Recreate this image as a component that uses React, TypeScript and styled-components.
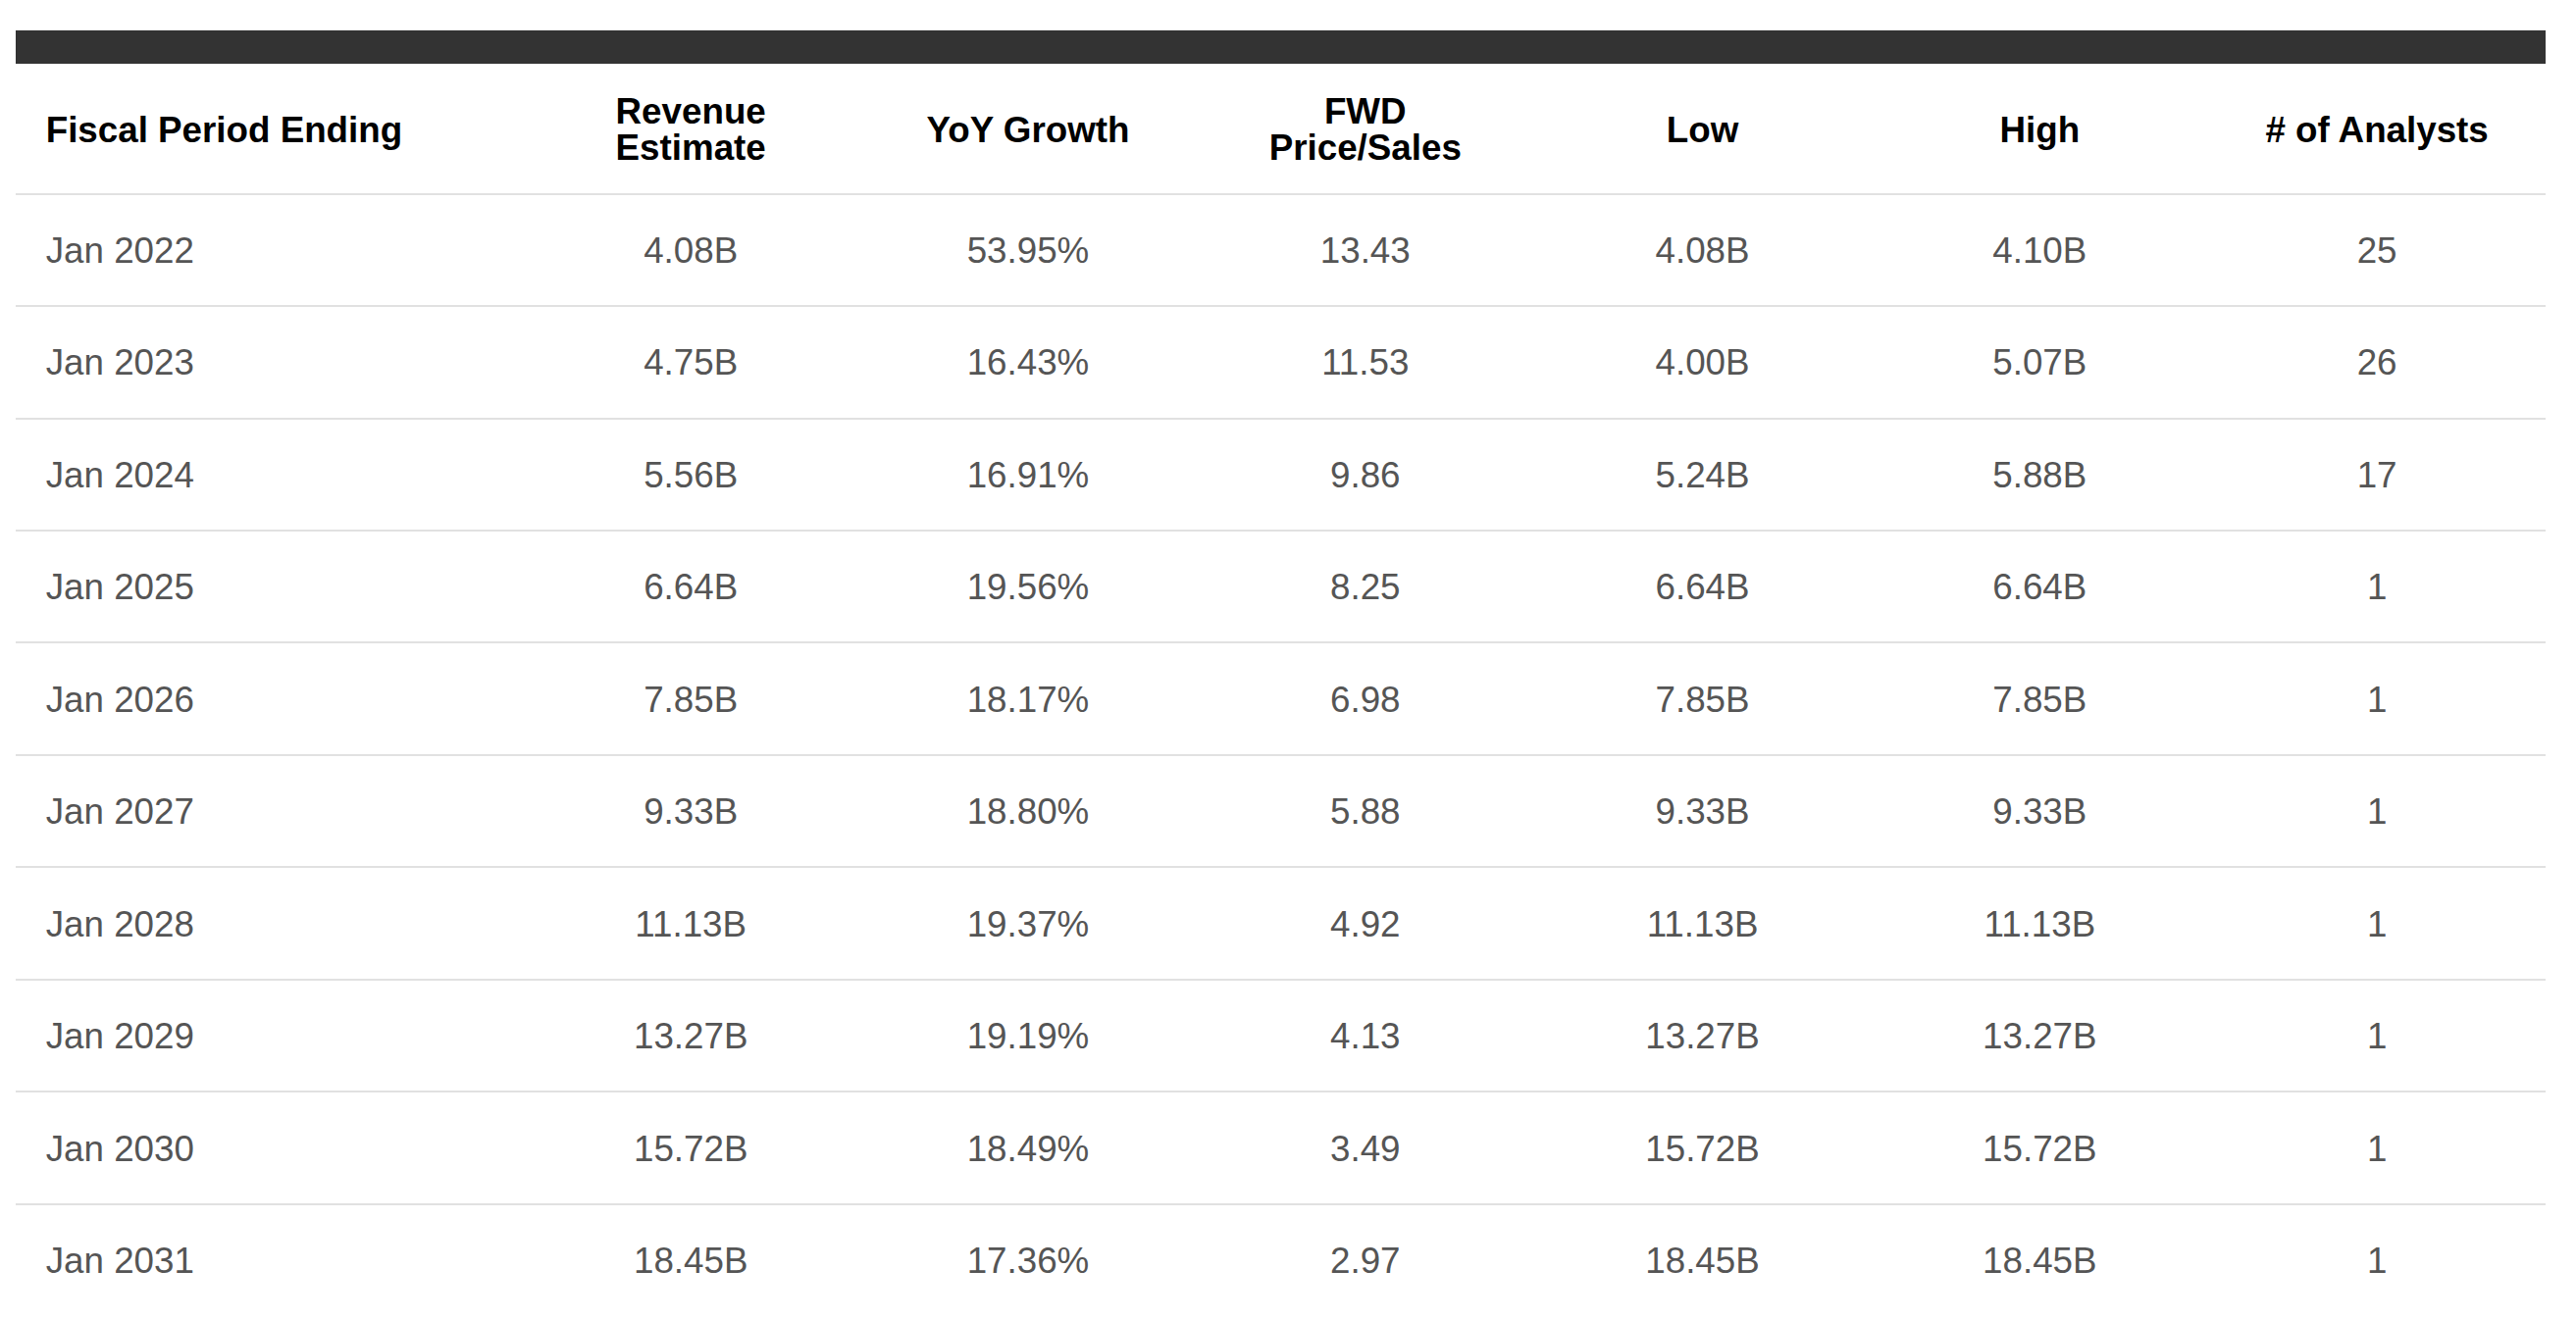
import React from "react";
import styled, { createGlobalStyle } from "styled-components";

const GlobalStyle = createGlobalStyle`
  html, body {
    margin: 0;
    padding: 0;
    background: #ffffff;
  }
  body {
    font-family: "Liberation Sans", Arial, Helvetica, sans-serif;
  }
`;

const Page = styled.div`
  padding: 30.7px 31px 0 16.3px;
  box-sizing: border-box;
  width: 2626px;
`;

const TopBar = styled.div`
  height: 34.5px;
  background: #333333;
`;

const Table = styled.table`
  width: 100%;
  border-collapse: collapse;
  table-layout: fixed;
  font-family: "Liberation Sans", Arial, Helvetica, sans-serif;
  font-size: 36.75px;
`;

const HeadRow = styled.tr`
  height: 132.5px;
  border-bottom: 2.5px solid #e1e1e1;
`;

const HeadCell = styled.th<{ $left?: boolean }>`
  font-weight: bold;
  color: #000000;
  line-height: 36.75px;
  text-align: ${(p) => (p.$left ? "left" : "center")};
  padding: 4px 0 0 ${(p) => (p.$left ? "30.4px" : "0")};
  vertical-align: middle;
`;

const BodyRow = styled.tr`
  height: 114.45px;
  border-bottom: 2.5px solid #e1e1e1;
  &:last-child {
    border-bottom: none;
  }
`;

const Cell = styled.td<{ $left?: boolean }>`
  color: #555555;
  line-height: 36.75px;
  text-align: ${(p) => (p.$left ? "left" : "center")};
  padding: 3px 0 0 ${(p) => (p.$left ? "30.4px" : "0")};
  vertical-align: middle;
  white-space: nowrap;
`;

const headers: React.ReactNode[] = [
  "Fiscal Period Ending",
  <>
    Revenue
    <br />
    Estimate
  </>,
  "YoY Growth",
  <>
    FWD
    <br />
    Price/Sales
  </>,
  "Low",
  "High",
  "# of Analysts",
];

const rows: string[][] = [
  ["Jan 2022", "4.08B", "53.95%", "13.43", "4.08B", "4.10B", "25"],
  ["Jan 2023", "4.75B", "16.43%", "11.53", "4.00B", "5.07B", "26"],
  ["Jan 2024", "5.56B", "16.91%", "9.86", "5.24B", "5.88B", "17"],
  ["Jan 2025", "6.64B", "19.56%", "8.25", "6.64B", "6.64B", "1"],
  ["Jan 2026", "7.85B", "18.17%", "6.98", "7.85B", "7.85B", "1"],
  ["Jan 2027", "9.33B", "18.80%", "5.88", "9.33B", "9.33B", "1"],
  ["Jan 2028", "11.13B", "19.37%", "4.92", "11.13B", "11.13B", "1"],
  ["Jan 2029", "13.27B", "19.19%", "4.13", "13.27B", "13.27B", "1"],
  ["Jan 2030", "15.72B", "18.49%", "3.49", "15.72B", "15.72B", "1"],
  ["Jan 2031", "18.45B", "17.36%", "2.97", "18.45B", "18.45B", "1"],
];

export default function App() {
  return (
    <>
      <GlobalStyle />
      <Page>
        <TopBar />
        <Table>
          <colgroup>
            <col style={{ width: "516px" }} />
            <col />
            <col />
            <col />
            <col />
            <col />
            <col />
          </colgroup>
          <thead>
            <HeadRow>
              {headers.map((h, i) => (
                <HeadCell key={i} $left={i === 0}>
                  {h}
                </HeadCell>
              ))}
            </HeadRow>
          </thead>
          <tbody>
            {rows.map((r, ri) => (
              <BodyRow key={ri}>
                {r.map((c, ci) => (
                  <Cell key={ci} $left={ci === 0}>
                    {c}
                  </Cell>
                ))}
              </BodyRow>
            ))}
          </tbody>
        </Table>
      </Page>
    </>
  );
}
